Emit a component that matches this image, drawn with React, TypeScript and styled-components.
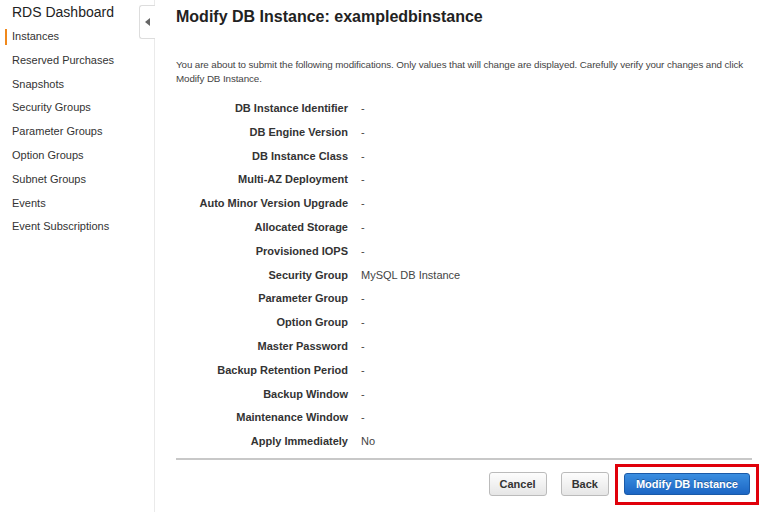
import { Fragment } from 'react'
import styled, { createGlobalStyle } from 'styled-components'

const GlobalStyle = createGlobalStyle`
  html, body {
    margin: 0;
    padding: 0;
    background: #fff;
    font-family: "Liberation Sans", Arial, sans-serif;
  }
`

const Page = styled.div`
  display: flex;
  width: 770px;
  height: 512px;
  overflow: hidden;
`

const Sidebar = styled.nav`
  position: relative;
  width: 155px;
  flex-shrink: 0;
  border-right: 1px solid #eaeaea;
  padding-top: 2px;
  box-sizing: border-box;
`

const SidebarTitle = styled.div`
  font-size: 14px;
  color: #222;
  padding: 0 0 0 12px;
  height: 20px;
  line-height: 20px;
`

const NavList = styled.ul`
  list-style: none;
  margin: 3px 0 0;
  padding: 0;
`

const NavItem = styled.li<{ $active?: boolean }>`
  position: relative;
  height: 23.8px;
  line-height: 23.8px;
  padding-left: 12px;
  font-size: 11px;
  color: #333;

  &::before {
    content: '';
    display: ${p => (p.$active ? 'block' : 'none')};
    position: absolute;
    left: 5px;
    top: 4px;
    width: 2px;
    height: 16px;
    background: #f0881b;
  }
`

const CollapseTab = styled.div`
  position: absolute;
  right: -1px;
  top: 5px;
  width: 15px;
  height: 32px;
  border: 1px solid #ddd;
  border-right: none;
  border-radius: 3px 0 0 3px;
  background: #fff;
  display: flex;
  align-items: center;
  justify-content: center;
`

const Main = styled.main`
  flex: 1;
  padding: 7px 18px 0 21px;
`

const Title = styled.h1`
  margin: 0;
  font-size: 16px;
  font-weight: bold;
  color: #222;
  line-height: 20px;
`

const Intro = styled.p`
  margin: 31px 0 0;
  font-size: 9.8px;
  letter-spacing: -0.1px;
  line-height: 14px;
  color: #444;
`

const Details = styled.dl`
  display: grid;
  grid-template-columns: 172px 1fr;
  column-gap: 13px;
  margin: 11px 0 0;
  border-bottom: 2px solid #c8c8c8;
  padding-bottom: 4px;
`

const Label = styled.dt`
  text-align: right;
  font-size: 11px;
  font-weight: bold;
  color: #333;
  height: 23.8px;
  line-height: 23.8px;
`

const Value = styled.dd`
  margin: 0;
  font-size: 11px;
  color: #444;
  height: 23.8px;
  line-height: 23.8px;
`

const Actions = styled.div`
  display: flex;
  justify-content: flex-end;
  align-items: center;
  gap: 14px;
  padding: 4px 0 0;
  margin-right: -7px;
`

const Button = styled.button<{ $primary?: boolean }>`
  height: ${p => (p.$primary ? '22px' : '24px')};
  padding: 0 ${p => (p.$primary ? '11px' : '10px')};
  font-family: "Liberation Sans", Arial, sans-serif;
  font-size: 11px;
  font-weight: bold;
  border-radius: 3px;
  color: ${p => (p.$primary ? '#fff' : '#333')};
  border: 1px solid ${p => (p.$primary ? '#1a5aa8' : '#bbb')};
  background: ${p =>
    p.$primary
      ? 'linear-gradient(#3a8ee0, #1c66c4)'
      : 'linear-gradient(#fdfdfd, #e6e6e6)'};
  text-shadow: ${p => (p.$primary ? '0 -1px 0 rgba(0,0,0,0.3)' : 'none')};
`

const Highlight = styled.div`
  margin-left: -8px;
  border: 3px solid #e0000a;
  padding: 6px 6px 7px;
`

const rows: [string, string][] = [
  ['DB Instance Identifier', '-'],
  ['DB Engine Version', '-'],
  ['DB Instance Class', '-'],
  ['Multi-AZ Deployment', '-'],
  ['Auto Minor Version Upgrade', '-'],
  ['Allocated Storage', '-'],
  ['Provisioned IOPS', '-'],
  ['Security Group', 'MySQL DB Instance'],
  ['Parameter Group', '-'],
  ['Option Group', '-'],
  ['Master Password', '-'],
  ['Backup Retention Period', '-'],
  ['Backup Window', '-'],
  ['Maintenance Window', '-'],
  ['Apply Immediately', 'No'],
]

const navItems = [
  'Instances',
  'Reserved Purchases',
  'Snapshots',
  'Security Groups',
  'Parameter Groups',
  'Option Groups',
  'Subnet Groups',
  'Events',
  'Event Subscriptions',
]

export default function App() {
  return (
    <Page>
      <GlobalStyle />
      <Sidebar>
        <SidebarTitle>RDS Dashboard</SidebarTitle>
        <NavList>
          {navItems.map((item, i) => (
            <NavItem key={item} $active={i === 0}>
              {item}
            </NavItem>
          ))}
        </NavList>
        <CollapseTab>
          <svg width="5" height="8" viewBox="0 0 5 8">
            <path d="M5 0 L0 4 L5 8 Z" fill="#666" />
          </svg>
        </CollapseTab>
      </Sidebar>
      <Main>
        <Title>Modify DB Instance: exampledbinstance</Title>
        <Intro>
          You are about to submit the following modifications. Only values that will change are
          displayed. Carefully verify your changes and click
          <br />
          Modify DB Instance.
        </Intro>
        <Details>
          {rows.map(([label, value]) => (
            <Fragment key={label}>
              <Label>{label}</Label>
              <Value>{value}</Value>
            </Fragment>
          ))}
        </Details>
        <Actions>
          <Button>Cancel</Button>
          <Button>Back</Button>
          <Highlight>
            <Button $primary>Modify DB Instance</Button>
          </Highlight>
        </Actions>
      </Main>
    </Page>
  )
}
